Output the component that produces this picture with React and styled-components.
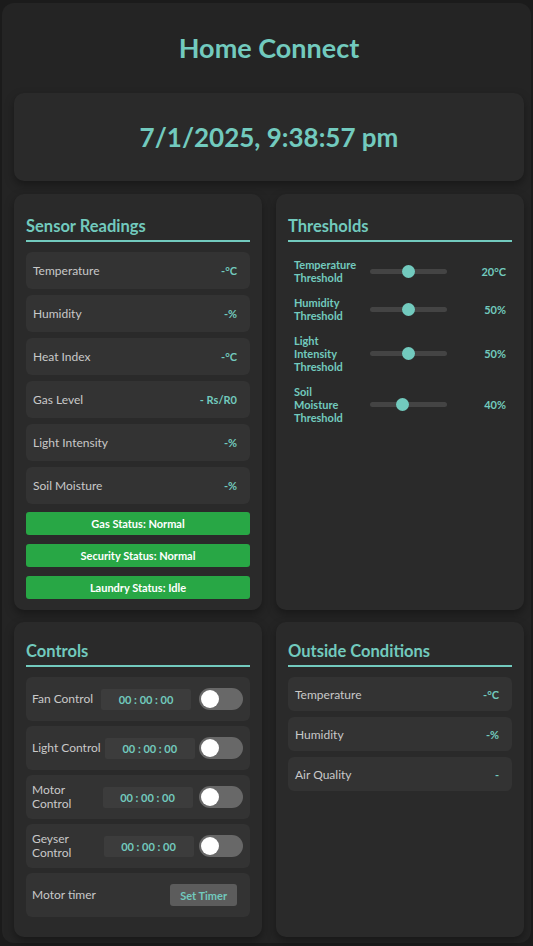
import React from 'react'
import styled, { createGlobalStyle } from 'styled-components'

const teal = '#72cabe'

const GlobalStyle = createGlobalStyle`
  html, body {
    margin: 0;
    padding: 0;
    background: #1b1b1b;
    font-family: Lato, "Open Sans", sans-serif;
  }
`

const sensors = [
  { name: 'Temperature', value: '-°C' },
  { name: 'Humidity', value: '-%' },
  { name: 'Heat Index', value: '-°C' },
  { name: 'Gas Level', value: '- Rs/R0' },
  { name: 'Light Intensity', value: '-%' },
  { name: 'Soil Moisture', value: '-%' },
]

const statuses = ['Gas Status: Normal', 'Security Status: Normal', 'Laundry Status: Idle']

const thresholds = [
  { name: 'Temperature Threshold', value: 20, max: 40, unit: '°C' },
  { name: 'Humidity Threshold', value: 50, max: 100, unit: '%' },
  { name: 'Light Intensity Threshold', value: 50, max: 100, unit: '%' },
  { name: 'Soil Moisture Threshold', value: 40, max: 100, unit: '%' },
]

const controls = [
  { name: 'Fan Control' },
  { name: 'Light Control' },
  { name: 'Motor Control', width: 64 },
  { name: 'Geyser Control', width: 66 },
]

const outside = [
  { name: 'Temperature', value: '-°C' },
  { name: 'Humidity', value: '-%' },
  { name: 'Air Quality', value: '-' },
]

export default function App() {
  return (
    <>
      <GlobalStyle />
      <Page>
        <Title>Home Connect</Title>
        <Clock>7/1/2025, 9:38:57 pm</Clock>
        <Grid>
          <Card>
            <CardTitle>Sensor Readings</CardTitle>
            <List>
              {sensors.map(s => (
                <Reading key={s.name}>
                  <Label>{s.name}</Label>
                  <Value>{s.value}</Value>
                </Reading>
              ))}
            </List>
            <StatusList>
              {statuses.map(s => <Status key={s}>{s}</Status>)}
            </StatusList>
          </Card>

          <Card>
            <CardTitle>Thresholds</CardTitle>
            <ThresholdList>
              {thresholds.map(t => (
                <ThresholdRow key={t.name}>
                  <ThresholdName>{t.name}</ThresholdName>
                  <Slider type="range" min="0" max={t.max} defaultValue={t.value} />
                  <ThresholdValue>{t.value}{t.unit}</ThresholdValue>
                </ThresholdRow>
              ))}
            </ThresholdList>
          </Card>

          <Card $top={18} $bottom={20}>
            <CardTitle>Controls</CardTitle>
            <List $gap={5}>
              {controls.map(c => (
                <ControlRow key={c.name}>
                  <ControlLabel $width={c.width}>{c.name}</ControlLabel>
                  <Timer>00 : 00 : 00</Timer>
                  <Toggle><Knob /></Toggle>
                </ControlRow>
              ))}
              <ControlRow $split>
                <ControlLabel>Motor timer</ControlLabel>
                <TimerButton>Set Timer</TimerButton>
              </ControlRow>
            </List>
          </Card>

          <Card $top={18} $bottom={20}>
            <CardTitle>Outside Conditions</CardTitle>
            <List $gap={6}>
              {outside.map(s => (
                <Reading key={s.name} $height={34}>
                  <Label>{s.name}</Label>
                  <Value>{s.value}</Value>
                </Reading>
              ))}
            </List>
          </Card>
        </Grid>
      </Page>
    </>
  )
}

const Page = styled.div`
  margin: 3px 2px;
  padding: 12px 7px 4px 12px;
  background: #242424;
  border-radius: 12px;
  box-sizing: border-box;
  min-height: 940px;
`

const Title = styled.h1`
  margin: 17px 0 29px;
  text-align: center;
  color: ${teal};
  font-size: 27px;
  line-height: 32px;
  font-weight: 700;
`

const Clock = styled.div`
  height: 88px;
  display: flex;
  align-items: center;
  justify-content: center;
  background: #2a2a2a;
  border-radius: 10px;
  box-shadow: 0 4px 10px rgba(0, 0, 0, 0.35);
  color: ${teal};
  font-size: 26px;
  font-weight: 700;
`

const Grid = styled.div`
  display: grid;
  grid-template-columns: 1fr 1fr;
  column-gap: 14px;
  row-gap: 12px;
  margin-top: 13px;
`

const Card = styled.div`
  background: #2a2a2a;
  border-radius: 10px;
  padding: ${p => p.$top ?? 21}px 12px ${p => p.$bottom ?? 11}px;
  box-shadow: 0 4px 10px rgba(0, 0, 0, 0.35);
`

const CardTitle = styled.h2`
  margin: 0 0 10px;
  padding-bottom: 3px;
  border-bottom: 2px solid ${teal};
  color: ${teal};
  font-size: 16.5px;
  line-height: 22px;
  font-weight: 700;
`

const List = styled.div`
  display: flex;
  flex-direction: column;
  gap: ${p => p.$gap ?? 6}px;
`

const Reading = styled.div`
  height: ${p => p.$height ?? 37}px;
  display: flex;
  align-items: center;
  justify-content: space-between;
  padding: 0 13px 0 7px;
  background: #333333;
  border-radius: 6px;
`

const Label = styled.span`
  color: #c9c9c9;
  font-size: 12px;
`

const Value = styled.span`
  color: ${teal};
  font-size: 11px;
  font-weight: 700;
`

const StatusList = styled.div`
  display: flex;
  flex-direction: column;
  gap: 9px;
  margin-top: 8px;
`

const Status = styled.div`
  height: 23px;
  display: flex;
  align-items: center;
  justify-content: center;
  background: #28a745;
  border-radius: 3px;
  color: #fff;
  font-size: 11px;
  font-weight: 700;
`

const ThresholdList = styled.div`
  display: flex;
  flex-direction: column;
  gap: 12px;
  padding: 6px 6px 0;
`

const ThresholdRow = styled.div`
  display: grid;
  grid-template-columns: 64px 77px 1fr;
  column-gap: 12px;
  align-items: center;
`

const ThresholdName = styled.span`
  color: ${teal};
  font-size: 11px;
  line-height: 13px;
  font-weight: 700;
`

const ThresholdValue = styled.span`
  text-align: right;
  color: ${teal};
  font-size: 11px;
  font-weight: 700;
`

const Slider = styled.input`
  -webkit-appearance: none;
  appearance: none;
  width: 77px;
  height: 5px;
  margin: 0;
  background: #444;
  border-radius: 3px;
  outline: none;

  &::-webkit-slider-thumb {
    -webkit-appearance: none;
    width: 13px;
    height: 13px;
    border-radius: 50%;
    background: ${teal};
    border: none;
  }
`

const ControlRow = styled.div`
  height: 44px;
  display: flex;
  align-items: center;
  justify-content: space-between;
  padding: 0 7px 0 6px;
  background: #333333;
  border-radius: 6px;
  ${p => p.$split && 'padding-right: 13px;'}
`

const ControlLabel = styled.span`
  flex: none;
  width: ${p => (p.$width ? `${p.$width}px` : 'auto')};
  color: #c9c9c9;
  font-size: 12px;
  line-height: 14px;
`

const Timer = styled.div`
  flex: 0 0 90px;
  height: 21px;
  display: flex;
  align-items: center;
  justify-content: center;
  background: #3c3c3c;
  border-radius: 2px;
  color: ${teal};
  font-size: 11px;
  font-weight: 700;
`

const Toggle = styled.div`
  flex: 0 0 44px;
  height: 22px;
  display: flex;
  align-items: center;
  padding: 0 2px;
  box-sizing: border-box;
  background: #686868;
  border-radius: 11px;
`

const Knob = styled.div`
  width: 18px;
  height: 18px;
  border-radius: 50%;
  background: #fff;
`

const TimerButton = styled.button`
  height: 22px;
  padding: 0 10px;
  border: none;
  border-radius: 3px;
  background: #5c5c5c;
  color: ${teal};
  font-family: inherit;
  font-size: 11px;
  font-weight: 700;
`
